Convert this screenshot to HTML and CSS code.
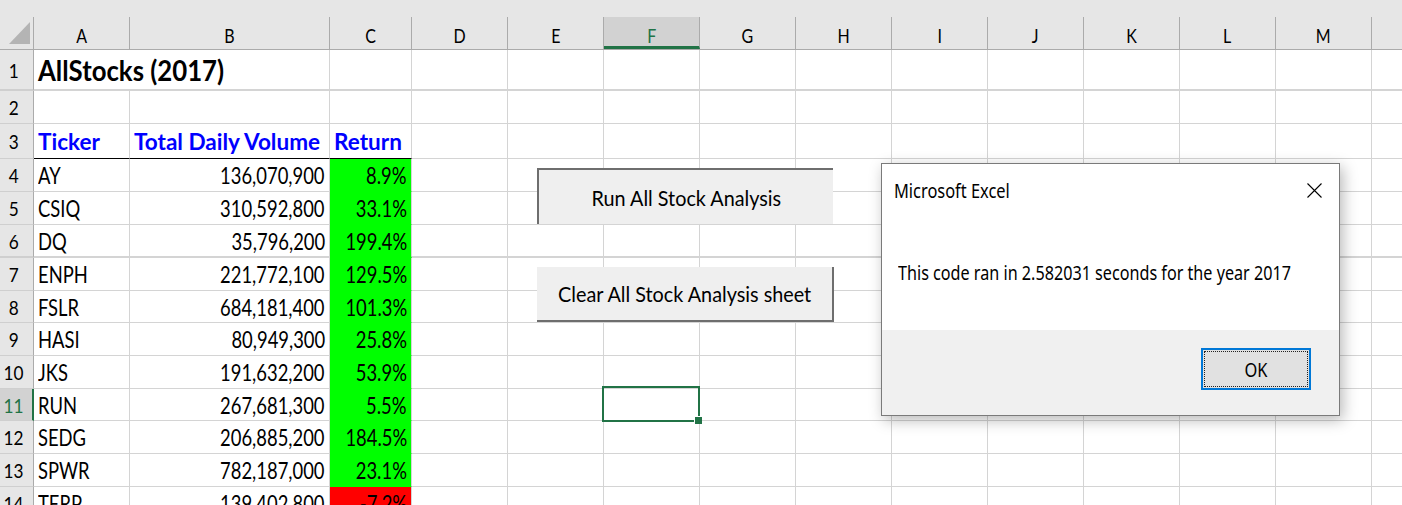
FILE: index.html
```html
<!DOCTYPE html>
<html>
<head>
<meta charset="utf-8">
<title>AllStocks (2017)</title>
<link rel="stylesheet" href="styles.css">
</head>
<body>
<div class="sheet">
  <div class="topstrip"></div>
  <div class="colhead">
    <div class="corner"><svg width="33" height="32" viewBox="0 0 33 32"><polygon points="9,27 30,27 30,5" fill="#b4b4b4"/></svg></div>
    <div class="ch wa"><span>A</span></div>
    <div class="ch wb"><span>B</span></div>
    <div class="ch wc"><span>C</span></div>
    <div class="ch wd"><span>D</span></div>
    <div class="ch wd"><span>E</span></div>
    <div class="ch wd sel"><span>F</span></div>
    <div class="ch wd"><span>G</span></div>
    <div class="ch wd"><span>H</span></div>
    <div class="ch wd"><span>I</span></div>
    <div class="ch wd"><span>J</span></div>
    <div class="ch wd"><span>K</span></div>
    <div class="ch wd"><span>L</span></div>
    <div class="ch wd"><span>M</span></div>
    <div class="ch rest-h"></div>
  </div>

  <div class="row h41 thick">
    <div class="rh"><span>1</span></div>
    <div class="c cab title"><span>AllStocks (2017)</span></div>
    <div class="c cc"></div>
    <div class="rest"></div>
  </div>
  <div class="row h33">
    <div class="rh"><span>2</span></div>
    <div class="c ca"></div>
    <div class="c cb"></div>
    <div class="c cc"></div>
    <div class="rest"></div>
  </div>
  <div class="row h35 hdr">
    <div class="rh"><span>3</span></div>
    <div class="c ca"><span>Ticker</span></div>
    <div class="c cb"><span>Total Daily Volume</span></div>
    <div class="c cc"><span>Return</span></div>
    <div class="rest"></div>
  </div>
  <div class="row h33">
    <div class="rh"><span>4</span></div>
    <div class="c ca"><span>AY</span></div>
    <div class="c cb num"><span>136,070,900</span></div>
    <div class="c cc num pos"><span>8.9%</span></div>
    <div class="rest"></div>
  </div>
  <div class="row h33">
    <div class="rh"><span>5</span></div>
    <div class="c ca"><span>CSIQ</span></div>
    <div class="c cb num"><span>310,592,800</span></div>
    <div class="c cc num pos"><span>33.1%</span></div>
    <div class="rest"></div>
  </div>
  <div class="row h33 thick">
    <div class="rh"><span>6</span></div>
    <div class="c ca"><span>DQ</span></div>
    <div class="c cb num"><span>35,796,200</span></div>
    <div class="c cc num pos"><span>199.4%</span></div>
    <div class="rest"></div>
  </div>
  <div class="row h33">
    <div class="rh"><span>7</span></div>
    <div class="c ca"><span>ENPH</span></div>
    <div class="c cb num"><span>221,772,100</span></div>
    <div class="c cc num pos"><span>129.5%</span></div>
    <div class="rest"></div>
  </div>
  <div class="row h32">
    <div class="rh"><span>8</span></div>
    <div class="c ca"><span>FSLR</span></div>
    <div class="c cb num"><span>684,181,400</span></div>
    <div class="c cc num pos"><span>101.3%</span></div>
    <div class="rest"></div>
  </div>
  <div class="row h33">
    <div class="rh"><span>9</span></div>
    <div class="c ca"><span>HASI</span></div>
    <div class="c cb num"><span>80,949,300</span></div>
    <div class="c cc num pos"><span>25.8%</span></div>
    <div class="rest"></div>
  </div>
  <div class="row h33">
    <div class="rh"><span>10</span></div>
    <div class="c ca"><span>JKS</span></div>
    <div class="c cb num"><span>191,632,200</span></div>
    <div class="c cc num pos"><span>53.9%</span></div>
    <div class="rest"></div>
  </div>
  <div class="row h32">
    <div class="rh active"><span>11</span></div>
    <div class="c ca"><span>RUN</span></div>
    <div class="c cb num"><span>267,681,300</span></div>
    <div class="c cc num pos"><span>5.5%</span></div>
    <div class="rest"></div>
  </div>
  <div class="row h33">
    <div class="rh"><span>12</span></div>
    <div class="c ca"><span>SEDG</span></div>
    <div class="c cb num"><span>206,885,200</span></div>
    <div class="c cc num pos"><span>184.5%</span></div>
    <div class="rest"></div>
  </div>
  <div class="row h33">
    <div class="rh"><span>13</span></div>
    <div class="c ca"><span>SPWR</span></div>
    <div class="c cb num"><span>782,187,000</span></div>
    <div class="c cc num pos"><span>23.1%</span></div>
    <div class="rest"></div>
  </div>
  <div class="row h33">
    <div class="rh"><span>14</span></div>
    <div class="c ca"><span>TERP</span></div>
    <div class="c cb num"><span>139,402,800</span></div>
    <div class="c cc num neg"><span>-7.2%</span></div>
    <div class="rest"></div>
  </div>
</div>

<div class="btn btn-run"><span>Run All Stock Analysis</span></div>
<div class="btn btn-clear"><span>Clear All Stock Analysis sheet</span></div>

<div class="selbox"><div class="handle"></div></div>

<div class="dialog">
  <div class="dlg-body">
    <div class="dlg-title">
      <span>Microsoft Excel</span>
      <svg class="dlg-x" width="15" height="15" viewBox="0 0 15 15"><path d="M0.5 0.5 L14.5 14.5 M14.5 0.5 L0.5 14.5" stroke="#000" stroke-width="1.1" fill="none"/></svg>
    </div>
    <div class="dlg-msg"><span>This code ran in 2.582031 seconds for the year 2017</span></div>
  </div>
  <div class="dlg-foot">
    <div class="ok"><div class="focus"><span>OK</span></div></div>
  </div>
</div>
</body>
</html>
```
FILE: styles.css
```css
html, body {
  margin: 0;
  padding: 0;
  background: #fff;
  overflow: hidden;
}
body {
  width: 1402px;
  height: 505px;
  font-family: Lato, "Open Sans", sans-serif;
  color: #000;
}
.sheet {
  width: 1402px;
}
.topstrip {
  height: 17px;
  background: #e6e6e6;
}
.colhead {
  display: flex;
  height: 33px;
  box-sizing: border-box;
  background: #e6e6e6;
  border-bottom: 1px solid #ababab;
}
.colhead > div {
  box-sizing: border-box;
  flex: none;
  height: 100%;
  border-right: 1px solid #ababab;
  display: flex;
  align-items: center;
  justify-content: center;
  padding-top: 3px;
  font-size: 20px;
}
.colhead span {
  display: inline-block;
  transform: scaleX(0.8);
  transform-origin: center;
}
.corner {
  width: 34px;
  padding-top: 0 !important;
}
.corner svg { display: block; }
.wa { width: 96px; }
.wb { width: 200px; }
.wc { width: 82px; }
.wd { width: 96px; }
.colhead .rest-h {
  flex: 1;
  border-right: none;
}
.colhead .sel {
  background: #d2d2d2;
  color: #217346;
  border-bottom: 3px solid #217346;
  padding-top: 6px;
}

.row {
  display: flex;
}
.h41 { height: 41px; }
.h35 { height: 35px; }
.h33 { height: 33px; }
.h32 { height: 32px; }
.row > div {
  box-sizing: border-box;
  height: 100%;
  flex: none;
  display: flex;
  align-items: center;
  border-bottom: 1px solid #d4d4d4;
  border-right: 1px solid #d4d4d4;
}
.row.thick > div {
  border-bottom-width: 2px;
}
.row span {
  display: inline-block;
  transform: scaleX(0.8);
  transform-origin: left center;
  white-space: nowrap;
}
.rh {
  width: 34px;
  background: #e6e6e6;
  border-right-color: #ababab !important;
  border-bottom-color: #cfcfcf !important;
  justify-content: center;
  padding-right: 5px;
  font-size: 20px;
}
.rh span { transform-origin: center; transform: scaleX(0.86); }
.rh.active {
  background: #d2d2d2;
  color: #217346;
  border-right: 2px solid #217346 !important;
}
.c {
  padding: 0 4px;
  font-size: 23px;
  white-space: nowrap;
}
.ca { width: 96px; }
.cb { width: 200px; }
.cc { width: 82px; }
.cab { width: 296px; }
.row .title {
  font-weight: 700;
  font-size: 28px;
  padding-left: 4px;
}
.row .title span { transform: scaleX(0.92); }
.num { justify-content: flex-end; }
.num span { transform-origin: right center; }
.hdr .c {
  color: #0000ff;
  font-weight: 700;
  border-bottom-color: #000;
}
.row.hdr .c span { transform: scaleX(0.98); }
.pos {
  background: #00ff00;
  border-bottom-color: #00ff00 !important;
}
.neg {
  background: #ff0000;
  border-bottom-color: #ff0000 !important;
}
.row .rest {
  flex: 1;
  border-right: none;
  background: repeating-linear-gradient(to right, transparent 0 95px, #d4d4d4 95px 96px);
}

/* floating form buttons */
.btn {
  position: absolute;
  box-sizing: border-box;
  left: 537px;
  width: 296px;
  background: #efefef;
  display: flex;
  align-items: center;
  justify-content: center;
  font-size: 22px;
}
.btn span {
  display: inline-block;
  transform: scaleX(0.9);
  transform-origin: center;
  white-space: nowrap;
}
.btn-run {
  top: 168px;
  height: 56px;
  border-top: 2px solid #6e6e6e;
  border-left: 2px solid #6e6e6e;
}
.btn-clear {
  top: 267px;
  height: 55px;
  width: 297px;
  border-right: 2px solid #6e6e6e;
  border-bottom: 2px solid #6e6e6e;
}

/* active cell */
.selbox {
  position: absolute;
  left: 602px;
  top: 386px;
  width: 98px;
  height: 36px;
  box-sizing: border-box;
  border: 2px solid #217346;
}
.handle {
  position: absolute;
  right: -4px;
  bottom: -4px;
  width: 7px;
  height: 7px;
  background: #217346;
  box-shadow: -1px -1px 0 #fff;
}

/* message box */
.dialog {
  position: absolute;
  left: 881px;
  top: 163px;
  width: 459px;
  height: 253px;
  box-sizing: border-box;
  border: 1px solid #7a7a7a;
  background: #fff;
  display: flex;
  flex-direction: column;
  box-shadow: 3px 4px 14px rgba(0, 0, 0, 0.28);
  font-family: "Noto Sans", "Open Sans", sans-serif;
  font-size: 20px;
}
.dialog span {
  display: inline-block;
  transform: scaleX(0.82);
  transform-origin: left center;
  white-space: nowrap;
}
.dlg-msg span { transform: scaleX(0.808); }
.dlg-body {
  height: 166px;
  background: #fff;
}
.dlg-title {
  height: 52px;
  display: flex;
  align-items: center;
  justify-content: space-between;
  padding: 0 17px 0 12px;
}
.dlg-x { display: block; }
.dlg-msg {
  margin-top: 43px;
  height: 26px;
  display: flex;
  align-items: center;
  padding-left: 16px;
}
.dlg-foot {
  flex: 1;
  background: #f0f0f0;
  display: flex;
  justify-content: flex-end;
  align-items: flex-start;
  padding: 18px 28px 0 0;
}
.ok {
  width: 110px;
  height: 42px;
  box-sizing: border-box;
  border: 2px solid #0078d7;
  background: #e1e1e1;
  padding: 1px;
  display: flex;
}
.focus {
  flex: 1;
  border: 1px dotted #222;
  display: flex;
  align-items: center;
  justify-content: center;
}
.focus span { transform-origin: center; }
```
